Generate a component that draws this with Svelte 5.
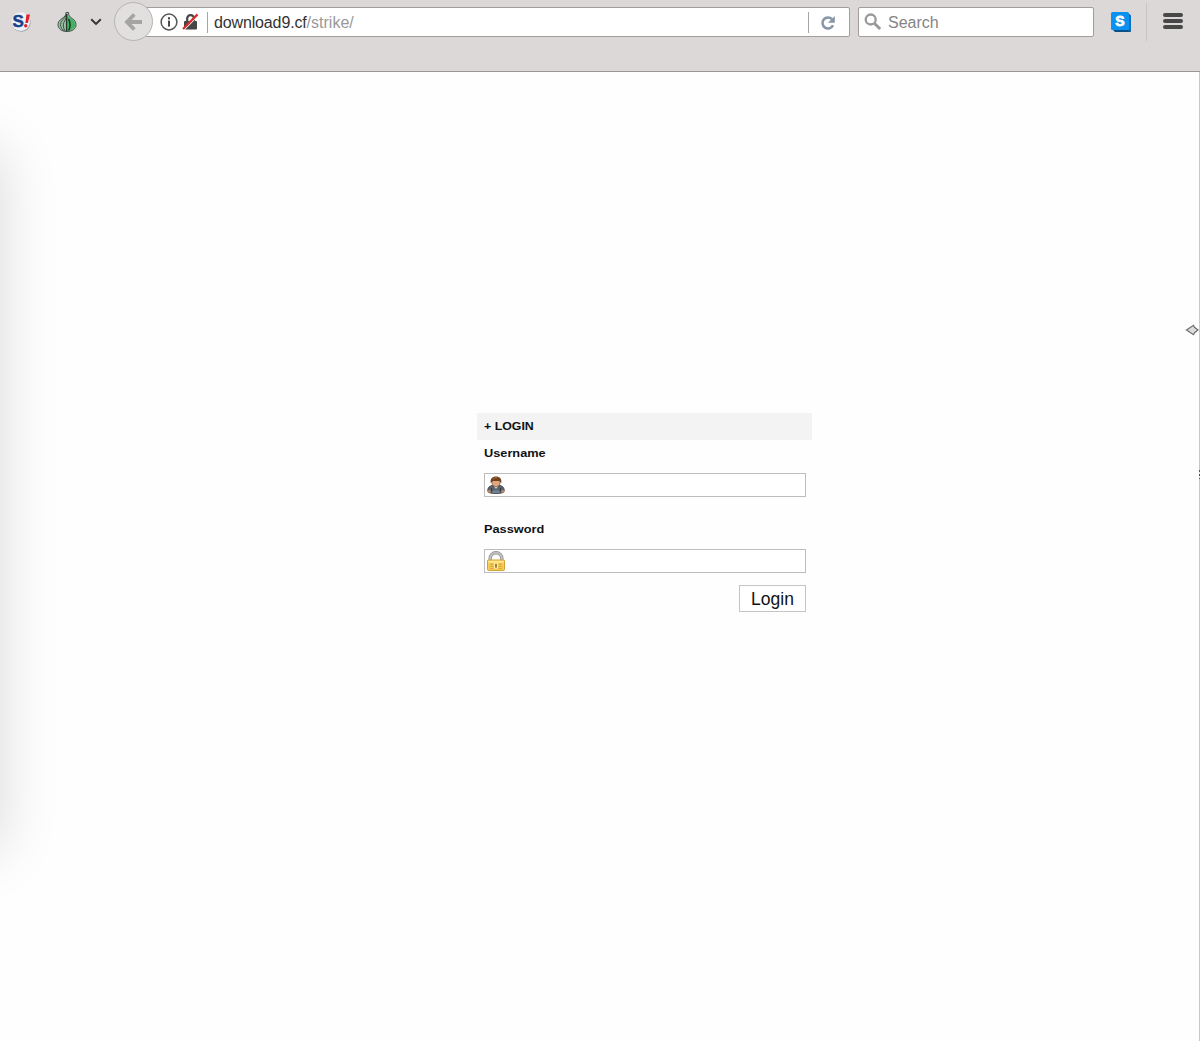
<script lang="ts">
  let address = $state({ host: "download9.cf", path: "/strike/" });
  let search = $state("");
  let username = $state("");
  let password = $state("");
</script>

<div class="browser">
  <header class="toolbar">
    <svg class="noscript" width="22" height="22" viewBox="0 0 22 22">
      <circle cx="11.3" cy="11.6" r="9.5" fill="#a9adb4" />
      <circle cx="10.7" cy="10.6" r="9.3" fill="#eef0f5" />
      <text x="2.6" y="16.3" class="ns-s">S</text>
      <path d="M16.400 3.500h3.600l-2.100 8.500h-2.500z" fill="#e2202c" />
      <circle cx="15.700" cy="14.800" r="1.700" fill="#e2202c" />
    </svg>

    <svg class="onion" width="20" height="22" viewBox="0 0 20 22">
      <path
        d="M9 1.5h2.5c0 3 1 4.2 3.700 6 2.700 1.800 3.800 3.800 3.800 6.200 0 4-3.600 6.800-9 6.800s-9-2.800-9-6.800c0-2.500 1.300-4.400 4-6.200C7.800 5.600 9 4.500 9 1.500z"
        fill="#9dbfa5"
        stroke="#405247"
        stroke-width="1"
      />
      <path d="M11 5.500c5 3 7 5 7 8.500 0 3.200-3 5-7 5.800z" fill="#3fb35f" />
      <path
        d="M9 4c-.5 4-5.500 5-5.500 9.500 0 3 1.500 5 3.500 6M9.500 6c-.8 3-3.200 5-3.200 8 0 3 1 4.500 2 6"
        fill="none"
        stroke="#3c5444"
        stroke-width="1"
      />
      <path d="M9.700 3v17" stroke="#26352b" stroke-width="1.500" />
      <path d="M11.500 8c1 2 1.600 4 1.600 6s-.6 4-1.600 5.500" fill="none" stroke="#26352b" stroke-width="1.600" />
    </svg>

    <svg class="caret" width="12" height="8" viewBox="0 0 12 8">
      <path d="M1.200 1.300l4.800 4.700 4.800-4.700" fill="none" stroke="#333" stroke-width="1.900" />
    </svg>

    <button class="back" aria-label="Back">
      <svg width="20" height="20" viewBox="0 0 20 20">
        <path d="M10.300 2.500L3 10l7.300 7.500M3.500 10H18" fill="none" stroke="#a6a3a3" stroke-width="3.800" />
      </svg>
    </button>

    <div class="address">
      <svg class="info" width="18" height="18" viewBox="0 0 18 18">
        <circle cx="9" cy="9" r="7.900" fill="none" stroke="#555" stroke-width="1.500" />
        <rect x="8" y="4.200" width="2" height="2.200" fill="#484848" />
        <rect x="8" y="7.600" width="2" height="6" fill="#484848" />
      </svg>
      <svg class="insecure" width="17" height="18" viewBox="0 0 17 18">
        <path d="M5.200 9V5.500a3.400 3.400 0 0 1 6.800 0V9" fill="none" stroke="#454545" stroke-width="2.200" />
        <rect x="2" y="8" width="13" height="8.500" rx="1" fill="#454545" />
        <path d="M1.500 17.300L16 2.800" stroke="#fff" stroke-width="1.200" />
        <path d="M1 16L15.600 1.400" stroke="#d92d2d" stroke-width="2.200" />
      </svg>
      <span class="divider"></span>
      <span class="url"><span class="host">{address.host}</span><span class="path">{address.path}</span></span>
      <span class="divider"></span>
      <svg class="reload" width="16" height="16" viewBox="0 0 16 16">
        <path d="M13 10.300a5.500 5.500 0 1 1-.9-6" fill="none" stroke="#8795a6" stroke-width="2.500" />
        <path d="M14.800 1v6.800H8z" fill="#8795a6" />
      </svg>
    </div>

    <div class="search">
      <svg width="18" height="18" viewBox="0 0 18 18">
        <circle cx="6.700" cy="6.500" r="5" fill="none" stroke="#999" stroke-width="2.300" />
        <path d="M10.300 10.200l5.900 5.800" stroke="#999" stroke-width="3" />
      </svg>
      <input placeholder="Search" aria-label="Search" bind:value={search} />
    </div>

    <svg class="skype" width="20" height="21" viewBox="0 0 20 21">
      <path d="M2 2h16.500l1.500 2v15.500L18.500 20H4l-2-2z" fill="#0a4f86" />
      <path d="M17 1l3 3v14l-3 1z" fill="#0873bf" />
      <rect x="0" y="0" width="18" height="18" rx="1.500" fill="#0b92f0" />
      <text x="8.800" y="13.700" text-anchor="middle" class="s-letter">S</text>
    </svg>

    <span class="separator"></span>

    <button class="menu" aria-label="Menu">
      <span></span>
      <span></span>
      <span></span>
    </button>
  </header>

  <main class="page">
    <div class="shade"></div>

    <form class="login" onsubmit={(e) => e.preventDefault()}>
      <h1><span class="wide">+ LOGIN</span></h1>

      <div class="fields">
        <label for="username"><span class="wide label">Username</span></label>
        <div class="field">
          <svg width="18" height="18" viewBox="0 0 18 18">
            <path d="M.7 14.500C.7 11.500 3 9.500 6 9.300h6c3 .2 5.300 2.200 5.300 5.200 0 2-2 3-8.300 3s-8.300-1-8.300-3z" fill="#59616c" stroke="#3b3b42" stroke-width=".8" />
            <path d="M6.300 9.300L9 13l2.700-3.700z" fill="#dce1e8" />
            <path d="M4.500 12v4M13.500 12v4" stroke="#303844" />
            <path d="M4.600 15.500q4.400-3 8.800 0l-1 1.500H5.600z" fill="#6f8194" />
            <circle cx="2.300" cy="15.300" r="1.600" fill="#b98560" />
            <circle cx="15.700" cy="15.300" r="1.600" fill="#b98560" />
            <ellipse cx="9" cy="6.500" rx="4.100" ry="4.200" fill="#e0a880" stroke="#75401f" stroke-width=".6" />
            <path d="M3.800 7.300C3 2.500 5.200.4 9 .4s6 2.100 5.200 6.900L12.400 5H5.600z" fill="#70401f" />
            <path d="M5.700 3.200Q7.500 1 10.500 1.600" fill="none" stroke="#a5683b" />
          </svg>
          <input id="username" type="text" bind:value={username} />
        </div>

        <label class="second" for="password"><span class="wide label">Password</span></label>
        <div class="field">
          <svg width="18" height="20" viewBox="0 0 18 20">
            <path d="M3.200 10V7.500a5.800 5.800 0 0 1 11.600 0V10" fill="none" stroke="#8f8f8f" stroke-width="3.400" />
            <path d="M3.200 10V7.500a5.800 5.800 0 0 1 11.600 0V10" fill="none" stroke="#c2c2c2" stroke-width="1.900" />
            <rect x=".5" y="9" width="17" height="10.500" rx="1" fill="#f8cb52" stroke="#d2a038" />
            <path d="M1.300 9.800h15.400v2H1.300z" fill="#ffe890" />
            <path d="M3 13.200h3.500M3 15.300h3.500M3 17.400h3.500M11.500 13.200H15M11.500 15.300H15M11.500 17.400H15" stroke="#cd9c3c" stroke-width=".8" />
            <rect x="7" y="12" width="4" height="5.500" fill="#ffeaa6" />
            <path d="M9 12.800v4" stroke="#80621f" stroke-width="1.500" />
          </svg>
          <input id="password" type="password" bind:value={password} />
        </div>

        <button class="submit" type="submit">Login</button>
      </div>
    </form>

    <svg class="cursor" width="14" height="12" viewBox="0 0 14 12">
      <path d="M1.500 6l7-4.700 1 2L13 6l-3.500 2.700-1 2z" fill="#ddd" stroke="#6c6c6c" stroke-width="1.200" />
    </svg>
    <span class="grip"></span>
  </main>
</div>

<style>
  :global(body) {
    background: #fefefe;
    font-family: "Liberation Sans", Arial, sans-serif;
  }

  .browser {
    height: 1041px;
    box-sizing: border-box;
    display: flex;
    flex-direction: column;
    overflow: hidden;
  }

  svg {
    display: block;
    flex: none;
  }

  button {
    font-family: inherit;
    padding: 0;
  }

  input {
    flex: 1;
    min-width: 0;
    padding: 0;
    border: none;
    outline: none;
    background: transparent;
    font-family: inherit;
    font-size: 16px;
  }

  .toolbar {
    height: 72px;
    flex: none;
    box-sizing: border-box;
    display: flex;
    align-items: flex-start;
    background: #dcd8d8;
    border-bottom: 1px solid #999696;
  }

  .noscript {
    margin: 11px 0 0 10px;
  }

  .ns-s {
    font: bold 17px "Liberation Sans", Arial, sans-serif;
    fill: #17428c;
    stroke: #17428c;
    stroke-width: 0.5px;
  }

  .onion {
    margin: 11px 0 0 25px;
  }

  .caret {
    margin: 18px 0 0 13px;
  }

  .back {
    position: relative;
    z-index: 1;
    width: 39px;
    height: 39px;
    flex: none;
    margin: 2px 0 0 12px;
    display: flex;
    align-items: center;
    justify-content: center;
    box-sizing: border-box;
    border: 1px solid #b7b3b3;
    border-radius: 50%;
    background: #e2dfdf;
  }

  .address,
  .search {
    height: 30px;
    box-sizing: border-box;
    display: flex;
    align-items: center;
    margin-top: 7px;
    border: 1px solid #a19d9d;
    border-radius: 2px;
    background: #fff;
    font-size: 16px;
  }

  .address {
    width: 705px;
    flex: none;
    margin-left: -8px;
    padding-left: 14px;
  }

  .insecure {
    margin: 0 8px 0 4px;
  }

  .divider {
    width: 1px;
    height: 21px;
    background: #a8a5a5;
  }

  .url {
    flex: 1;
    padding: 2px 0 0 6px;
    color: #333;
  }

  .host {
    letter-spacing: -0.14px;
  }

  .path {
    color: #999;
  }

  .reload {
    margin: 1px 13px 0 11px;
  }

  .search {
    width: 236px;
    flex: none;
    margin-left: 8px;
    padding-left: 5px;
  }

  .search input {
    margin-left: 6px;
    padding-top: 2px;
  }

  .search input::placeholder {
    color: #858585;
    opacity: 1;
  }

  .skype {
    margin: 12px 0 0 17px;
  }

  .s-letter {
    font: bold 14px "Liberation Sans", Arial, sans-serif;
    fill: #fff;
    stroke: #fff;
    stroke-width: 0.8px;
  }

  .separator {
    width: 1px;
    height: 38px;
    margin: 3px 0 0 15px;
    background: #c9c5c5;
  }

  .menu {
    display: flex;
    flex-direction: column;
    gap: 2px;
    margin: 13px 0 0 16px;
    border: none;
    background: none;
  }

  .menu span {
    width: 20px;
    height: 4px;
    border-radius: 2px;
    background: #484848;
  }

  .page {
    position: relative;
    flex: 1;
    border-right: 1px solid #c9c7c7;
  }

  .shade {
    position: absolute;
    left: -400px;
    top: 78px;
    width: 400px;
    height: 700px;
    box-shadow: 0 0 54px rgba(0, 0, 0, 0.15);
  }

  .login {
    width: 335px;
    margin: 341px 0 0 477px;
    color: #111;
  }

  h1 {
    height: 27px;
    margin: 0;
    padding-left: 7px;
    background: #f3f3f3;
    font-size: 11.5px;
    line-height: 26px;
  }

  .wide {
    display: inline-block;
    transform: scaleX(1.075);
    transform-origin: left;
  }

  .wide.label {
    transform: scaleX(1.1);
  }

  .fields {
    display: flex;
    flex-direction: column;
    padding: 0 6px 0 7px;
  }

  label {
    height: 33px;
    font-size: 11.6px;
    font-weight: bold;
    line-height: 26px;
  }

  .second {
    margin-top: 19px;
  }

  .field {
    height: 24px;
    box-sizing: border-box;
    display: flex;
    align-items: center;
    padding: 0 2px;
    border: 1px solid #bdbdbd;
    background: #fff;
  }

  .submit {
    align-self: flex-end;
    width: 67px;
    height: 27px;
    margin-top: 12px;
    padding-top: 1px;
    border: 1px solid #c4c4c4;
    background: #fff;
    color: #111;
    font-size: 17.5px;
  }

  .cursor {
    position: absolute;
    right: 0;
    top: 252px;
  }

  .grip {
    position: absolute;
    right: -1px;
    top: 398px;
    width: 1px;
    height: 9px;
    background: repeating-linear-gradient(#555 0 2px, #ddd 2px 4px);
  }
</style>
